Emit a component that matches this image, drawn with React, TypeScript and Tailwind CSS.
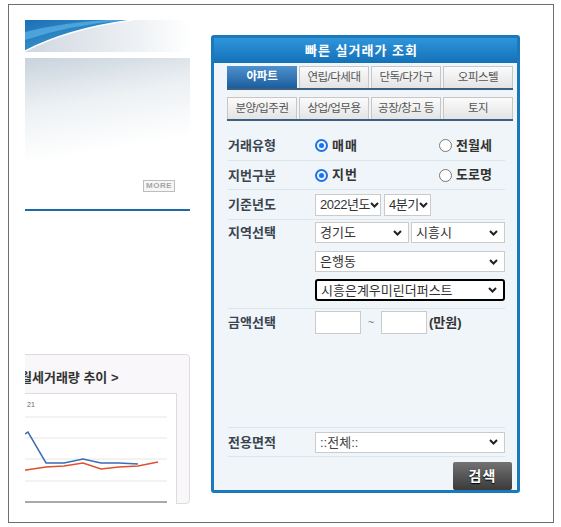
const FONT = "font-['Liberation_Sans','Noto_Sans_CJK_KR',sans-serif]";

function Chevron() {
  return (
    <svg width="9" height="6" viewBox="0 0 9 6" className="shrink-0">
      <path d="M1 1l3.5 3.5L8 1" fill="none" stroke="#222" strokeWidth="2" />
    </svg>
  );
}

function Select({ value, className = '' }: { value: string; className?: string }) {
  return (
    <div
      className={`flex items-center justify-between bg-white border border-[#cbcbcb] pl-[4px] pr-[6px] text-[13px] leading-none text-[#333] whitespace-nowrap overflow-hidden ${className}`}
    >
      <span>{value}</span>
      <Chevron />
    </div>
  );
}

function Radio({ checked }: { checked?: boolean }) {
  return checked ? (
    <span className="w-[13px] h-[13px] rounded-full border-2 border-[#1a73e8] flex items-center justify-center shrink-0">
      <span className="w-[5px] h-[5px] rounded-full bg-[#1a73e8]" />
    </span>
  ) : (
    <span className="w-[13px] h-[13px] rounded-full border border-[#767676] bg-white shrink-0" />
  );
}

const TABS_1 = ['아파트', '연립/다세대', '단독/다가구', '오피스텔'];
const TABS_2 = ['분양/입주권', '상업/업무용', '공장/창고 등', '토지'];

function TabRow({ items, active }: { items: string[]; active?: number }) {
  return (
    <div className="flex gap-[2px] border-b-2 border-[#3d5f82] w-[286px]">
      {items.map((t, i) =>
        i === active ? (
          <div
            key={t}
            className="w-[70px] h-[22px] flex items-center justify-center bg-gradient-to-b from-[#4f92cf] to-[#1c5d9d] text-white font-bold text-[11.5px] tracking-[-0.3px]"
          >
            {t}
          </div>
        ) : (
          <div
            key={t}
            className="w-[70px] h-[22px] flex items-center justify-center bg-gradient-to-b from-[#fbfbfb] to-[#e4e4e4] border border-b-0 border-[#c6c6c6] text-[#555] text-[11.5px] tracking-[-0.5px] whitespace-nowrap"
          >
            {t}
          </div>
        )
      )}
    </div>
  );
}

function Label({ children }: { children: string }) {
  return <div className="w-[87px] shrink-0 text-[13px] font-bold text-[#3b4550] leading-none">{children}</div>;
}

function Swoosh() {
  return (
    <svg width="165" height="32" viewBox="0 0 165 32" className="block">
      <defs>
        <linearGradient id="sg" x1="0" y1="0" x2="1" y2="0">
          <stop offset="0" stopColor="#cfd7df" />
          <stop offset="0.7" stopColor="#eff2f5" />
          <stop offset="1" stopColor="#ffffff" />
        </linearGradient>
        <linearGradient id="bg1" x1="0" y1="0" x2="1" y2="1">
          <stop offset="0" stopColor="#1b70b5" />
          <stop offset="1" stopColor="#4aa6dd" />
        </linearGradient>
      </defs>
      <rect width="165" height="32" fill="url(#sg)" />
      <path d="M0 0H108Q45 8 0 31Z" fill="url(#bg1)" />
      <path d="M0 12Q40 2 85 0H100Q45 5 0 20Z" fill="#5cb4e6" opacity="0.7" />
      <path d="M0 31Q45 8 108 0" fill="none" stroke="#ffffff" strokeWidth="1.5" />
    </svg>
  );
}

function Chart() {
  const blue = [[0, 52], [22, 38], [40, 69], [58, 69], [77, 65], [95, 69], [113, 69], [132, 70]];
  const red = [[0, 78], [20, 76], [40, 73], [58, 72], [77, 69], [95, 75], [113, 73], [132, 72], [152, 68]];
  const pts = (a: number[][]) => a.map(p => p.join(',')).join(' ');
  return (
    <svg width="171" height="110" viewBox="0 0 171 110" className="block">
      <text x="21" y="13" fontSize="7" fill="#666" fontFamily="Liberation Sans, sans-serif">21</text>
      {[23, 44, 65, 87].map(y => (
        <line key={y} x1="0" x2="161" y1={y} y2={y} stroke="#e6e6e6" />
      ))}
      <line x1="0" x2="161" y1="108" y2="108" stroke="#555" />
      <polyline points={pts(blue)} fill="none" stroke="#3a6eb5" strokeWidth="1.5" />
      <polyline points={pts(red)} fill="none" stroke="#e0502e" strokeWidth="1.5" />
    </svg>
  );
}

export default function App() {
  return (
    <div className={`${FONT} w-[561px] h-[527px] bg-white pt-[4px] pl-[8px]`}>
      <div className="w-[546px] h-[519px] border border-[#6e6e6e] flex overflow-hidden">
        {/* left: page content behind the widget */}
        <div className="w-[181px] shrink-0 pl-[16px] pt-[15px]">
          <div className="w-[165px] overflow-hidden">
            <Swoosh />
            <div className="mt-[6px] h-[149px] bg-[linear-gradient(170deg,#c8d3dd_0%,#edf1f4_30%,#ffffff_60%)] flex flex-col justify-end items-end pb-[15px] pr-[15px]">
              <div className="w-[32px] h-[12px] border border-[#bdbdbd] bg-[#f6f6f6] text-[8px] leading-[10px] font-bold text-[#a5a5a5] text-center tracking-[0.5px]">
                MORE
              </div>
            </div>
            <div className="mt-[2px] h-[2px] bg-[#1d6aa5]" />
            <div className="mt-[143px] -ml-[13px] w-[178px] h-[150px] border border-[#dcdcdc] rounded-[4px] bg-[#f9f7f9]">
              <div className="pl-[7px] pt-[15px] text-[13px] leading-[16px] font-bold text-[#333] whitespace-nowrap">
                월세거래량 추이 &gt;
              </div>
              <div className="mt-[7px] w-[164px] h-[111px] bg-white border-t border-r border-[#dddddd] overflow-hidden">
                <div className="-ml-[7px]">
                  <Chart />
                </div>
              </div>
            </div>
          </div>
        </div>

        {/* right: quick lookup widget */}
        <div className="ml-[21px] mt-[30px] w-[309px] h-[458px] shrink-0 border-[3px] border-[#1b78bb] rounded-[3px] bg-[#eff5f9] flex flex-col">
          <div className="h-[25px] bg-gradient-to-b from-[#2f95db] to-[#1371b8] flex items-center justify-center text-white font-bold text-[13px] tracking-[1px] pr-[8px]">
            빠른 실거래가 조회
          </div>
          <div className="pl-[13px] pt-[3px] flex flex-col gap-[7px]">
            <TabRow items={TABS_1} active={0} />
            <TabRow items={TABS_2} />
          </div>

          <div className="ml-[14px] w-[277px] mt-[10px] flex flex-col">
            <div className="h-[30px] flex items-center border-b border-[#dde5ec]">
              <Label>거래유형</Label>
              <div className="w-[124px] flex items-center gap-[4px] text-[13px] font-bold text-[#333] tracking-[1px]">
                <Radio checked />
                <span>매매</span>
              </div>
              <div className="flex items-center gap-[4px] text-[13px] font-bold text-[#333]">
                <Radio />
                <span>전월세</span>
              </div>
            </div>
            <div className="h-[29px] flex items-center border-b border-[#dde5ec]">
              <Label>지번구분</Label>
              <div className="w-[124px] flex items-center gap-[4px] text-[13px] font-bold text-[#333] tracking-[1px]">
                <Radio checked />
                <span>지번</span>
              </div>
              <div className="flex items-center gap-[4px] text-[13px] font-bold text-[#333]">
                <Radio />
                <span>도로명</span>
              </div>
            </div>
            <div className="h-[30px] flex items-center border-b border-[#dde5ec]">
              <Label>기준년도</Label>
              <Select value="2022년도" className="w-[66px] h-[22px] pl-[3px] pr-[2px] text-[12px] tracking-[-0.5px]" />
              <Select value="4분기" className="ml-[3px] w-[47px] h-[22px] pl-[3px] pr-[5px] text-[12px] tracking-[-0.5px]" />
            </div>
            <div className="h-[89px] flex border-b border-[#dde5ec] pt-[2px]">
              <div className="h-[21px] flex items-center">
                <Label>지역선택</Label>
              </div>
              <div className="flex flex-col">
                <div className="flex gap-[2px]">
                  <Select value="경기도" className="w-[94px] h-[21px]" />
                  <Select value="시흥시" className="w-[94px] h-[21px]" />
                </div>
                <Select value="은행동" className="mt-[8px] w-[190px] h-[21px]" />
                <Select
                  value="시흥은계우미린더퍼스트"
                  className="mt-[7px] w-[190px] h-[22px] border-2 border-black rounded-[3px] pr-[4px]"
                />
              </div>
            </div>
            <div className="h-[119px] flex items-start border-b border-[#dde5ec] pt-[2px]">
              <div className="h-[23px] flex items-center">
                <Label>금액선택</Label>
              </div>
              <div className="flex items-center h-[23px]">
                <div className="w-[46px] h-[23px] bg-white border border-[#cbcbcb]" />
                <span className="w-[20px] text-center text-[11px] text-[#777]">~</span>
                <div className="w-[46px] h-[23px] bg-white border border-[#cbcbcb]" />
                <span className="ml-[2px] text-[13px] font-bold text-[#333]">(만원)</span>
              </div>
            </div>
            <div className="h-[29px] flex items-center border-b border-[#dde5ec]">
              <Label>전용면적</Label>
              <Select value="::전체::" className="w-[190px] h-[21px] text-[#444]" />
            </div>
          </div>

          <div className="flex justify-end pr-[5px] mt-[5px]">
            <div className="w-[59px] h-[28px] rounded-[2px] bg-gradient-to-b from-[#737373] to-[#3b3b3b] flex items-center justify-center text-white font-bold text-[14px] tracking-[1px] [text-shadow:0_1px_1px_#000]">
              검색
            </div>
          </div>
        </div>
      </div>
    </div>
  );
}
